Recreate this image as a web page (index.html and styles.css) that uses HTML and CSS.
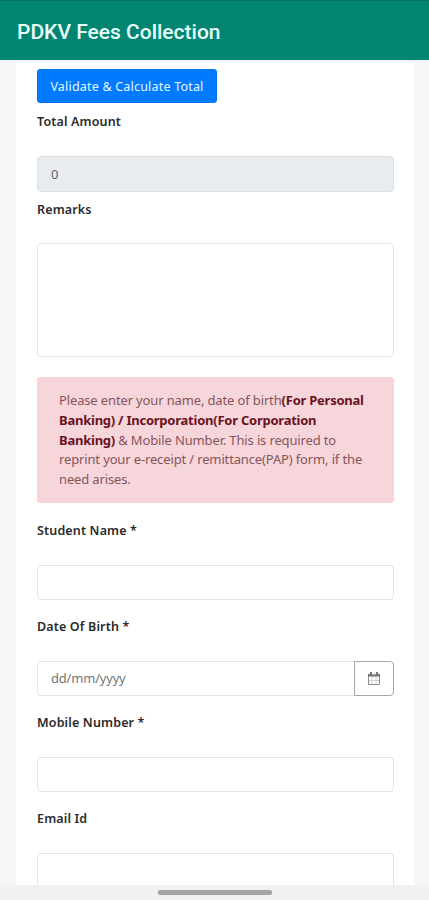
FILE: index.html
```html
<!DOCTYPE html>
<html lang="en">
<head>
  <meta charset="UTF-8" />
  <meta name="viewport" content="width=device-width, initial-scale=1.0" />
  <title>PDKV Fees Collection</title>
  <link rel="stylesheet" href="styles.css">
</head>
<body>

<header class="app-bar">
  <h1>PDKV Fees Collection</h1>
</header>

<main class="page">
  <form class="card">
    <button type="button" class="btn-validate">Validate &amp; Calculate Total</button>

    <div class="form-group total">
      <label for="total">Total Amount</label>
      <input type="text" id="total" class="form-control" value="0" readonly />
    </div>

    <div class="form-group remarks">
      <label for="remarks">Remarks</label>
      <textarea id="remarks" class="form-control"></textarea>
    </div>

    <div class="alert">
      Please enter your name, date of birth<b>(For Personal</b><br>
      <b>Banking) / Incorporation(For Corporation</b><br>
      <b>Banking)</b> &amp; Mobile Number. This is required to<br>
      reprint your e-receipt / remittance(PAP) form, if the<br>
      need arises.
    </div>

    <div class="form-group">
      <label for="name">Student Name *</label>
      <input type="text" id="name" class="form-control" />
    </div>

    <div class="form-group">
      <label for="dob">Date Of Birth *</label>
      <div class="input-group">
        <input type="text" id="dob" class="form-control" placeholder="dd/mm/yyyy" />
        <button type="button" class="btn-calendar" aria-label="Pick a date">
          <svg width="14" height="15" viewBox="0 0 14 15" fill="none">
            <path d="M1.5 3.5h11v10h-11z" stroke="#8c8c8c" />
            <path d="M1 3h12v2.6H1z" fill="#777" />
            <path d="M4 1v3.5M10 1v3.5" stroke="#777" stroke-width="2" />
            <path d="M5.2 3h3.6" stroke="#ddd" />
            <path d="M5 6v7M9 6v7M2 9.5h10" stroke="#d2d2d2" />
          </svg>
        </button>
      </div>
    </div>

    <div class="form-group">
      <label for="mobile">Mobile Number *</label>
      <input type="text" id="mobile" class="form-control" />
    </div>

    <div class="form-group">
      <label for="email">Email Id</label>
      <textarea id="email" class="form-control"></textarea>
    </div>
  </form>
</main>

<footer class="nav-bar">
  <div class="nav-handle"></div>
</footer>

</body>
</html>
```
FILE: styles.css
```css
* {
  box-sizing: border-box;
}

body {
  display: flex;
  flex-direction: column;
  height: 900px;
  margin: 0;
  overflow: hidden;
  background-color: #f5f7f7;
  color: #2b2b2b;
  font-family: "Noto Sans", sans-serif;
  font-size: 13px;
}

.app-bar {
  display: flex;
  flex: none;
  align-items: center;
  height: 60px;
  padding: 2px 17px 0;
  background-color: #008573;
  border-top: 1px solid #00705f;
}

h1 {
  margin: 0;
  color: #e9fffb;
  font-family: Roboto, sans-serif;
  font-size: 21px;
  font-weight: 500;
  white-space: nowrap;
}

.page {
  flex: 1;
  min-height: 0;
  padding: 3px 15px 0 16px;
  overflow: hidden;
}

.card {
  padding: 6px 20px 0 21px;
  background-color: #fff;
}

button,
input,
textarea {
  display: block;
  margin: 0;
  font-family: inherit;
  font-size: 13px;
}

.btn-validate {
  width: 180px;
  height: 34px;
  padding: 0;
  background-color: #007bff;
  color: #e8f5ff;
  border: 1px solid #0073f0;
  border-radius: 3px;
  font-size: 12.5px;
  letter-spacing: 0.2px;
  white-space: nowrap;
}

.form-group {
  margin-bottom: 16px;
}

label {
  display: block;
  margin-bottom: 24px;
  padding-top: 1px;
  font-size: 12.5px;
  font-weight: 600;
  letter-spacing: 0.15px;
  line-height: 20px;
}

.form-control {
  width: 357px;
  height: 35px;
  padding: 0 13px;
  background-color: #fff;
  color: #666;
  border: 1px solid #e2e4e5;
  border-radius: 4px;
  outline: none;
  resize: none;
}

.form-control::placeholder {
  color: #777;
  letter-spacing: -0.2px;
  opacity: 1;
}

textarea.form-control {
  height: 114px;
}

.total {
  margin-top: 8px;
  margin-bottom: 7px;
}

.total .form-control {
  height: 36px;
  background-color: #e9ecef;
  border-color: #dde0e3;
}

.remarks {
  margin-bottom: 20px;
}

.remarks label {
  margin-bottom: 23px;
}

.alert {
  width: 357px;
  height: 126px;
  margin-bottom: 17px;
  padding: 14px 22px;
  background-color: #f6d6da;
  color: #86555c;
  border-radius: 3px;
  letter-spacing: -0.14px;
  line-height: 19.75px;
  white-space: nowrap;
}

.alert b {
  color: #6b121e;
  letter-spacing: -0.24px;
}

.input-group {
  display: flex;
}

.input-group .form-control {
  flex: 1;
  padding-bottom: 2px;
  border-right: 0;
  border-radius: 4px 0 0 4px;
}

.btn-calendar {
  display: flex;
  align-items: center;
  justify-content: center;
  width: 40px;
  height: 35px;
  padding: 0;
  background-color: #fff;
  border: 1px solid #a5a8aa;
  border-radius: 0 4px 4px 0;
}

.nav-bar {
  display: flex;
  flex: none;
  justify-content: center;
  height: 15px;
  padding-top: 5px;
  background-color: #f1f1f1;
}

.nav-handle {
  width: 114px;
  height: 5px;
  background-color: #a3a3a3;
  border-radius: 2px;
}
```
